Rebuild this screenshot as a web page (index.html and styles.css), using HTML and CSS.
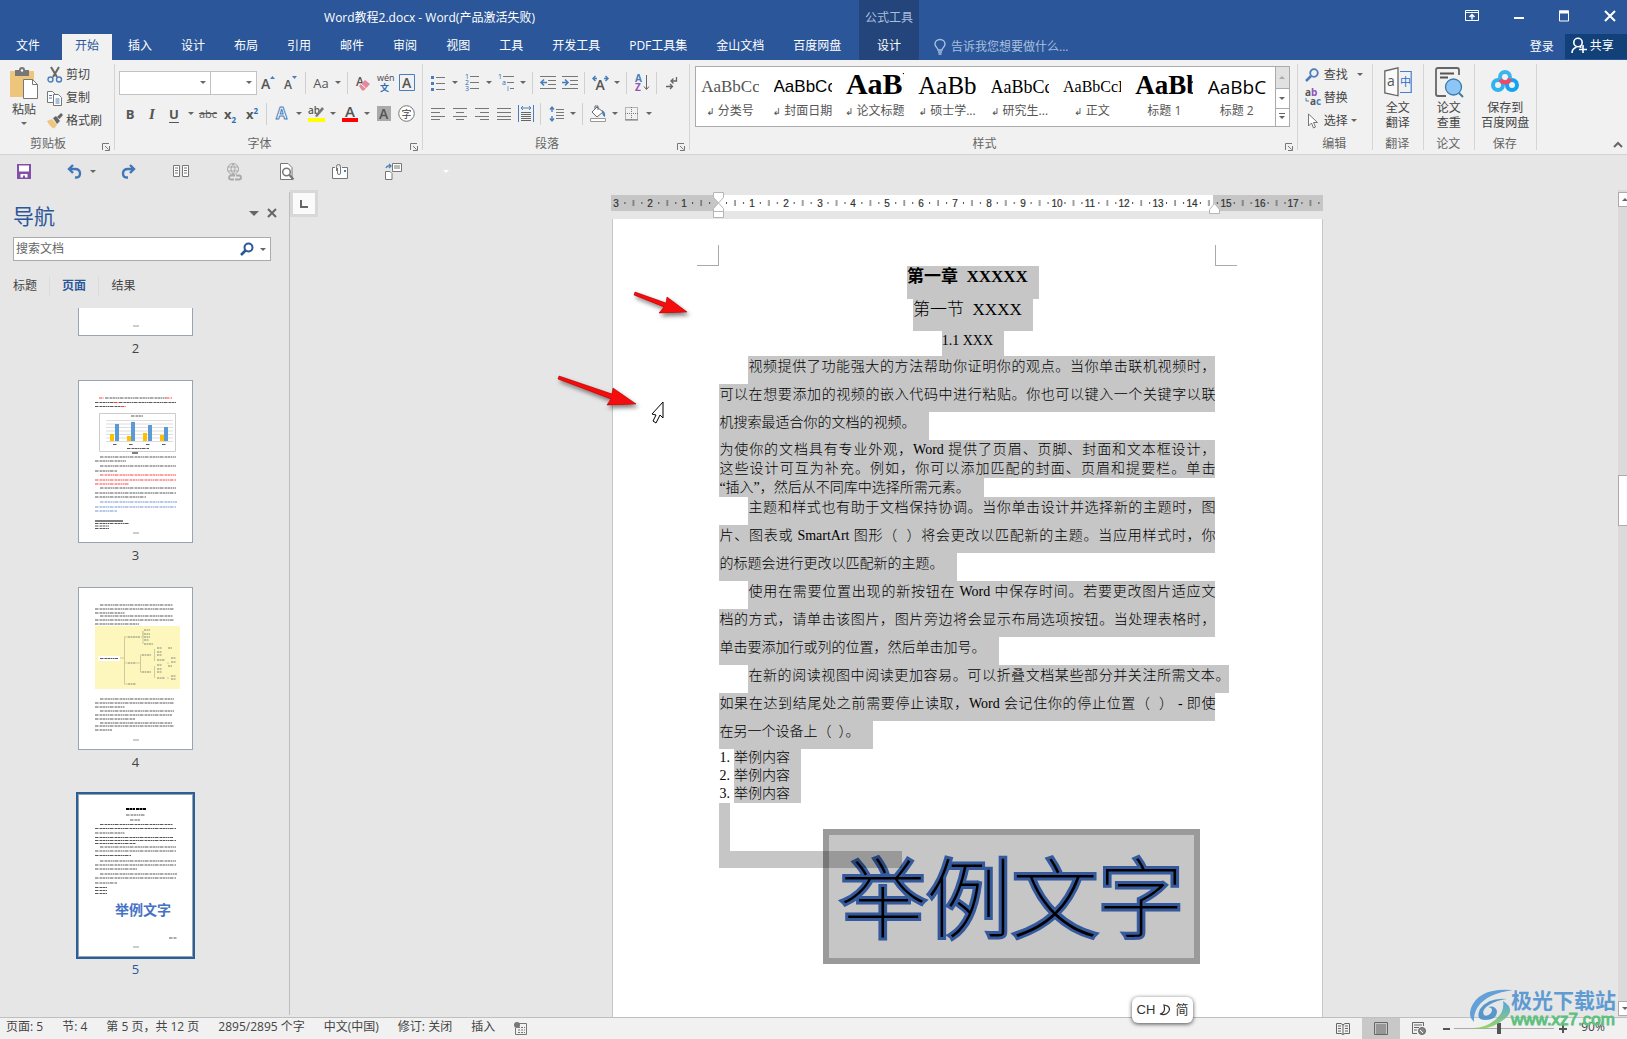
FILE: index.html
```html
<!DOCTYPE html>
<html lang="zh-CN">
<head>
<meta charset="utf-8">
<title>Word教程2.docx - Word</title>
<link rel="stylesheet" href="styles.css">
</head>
<body>
<div class="app">
  <header class="titlebar">
    <div class="tabs-side">
      <h1 class="doc-title">Word教程2.docx - Word(产品激活失败)</h1>
      <nav class="tabs">
        <button class="tab file">文件</button>
        <button class="tab active">开始</button>
        <button class="tab">插入</button>
        <button class="tab">设计</button>
        <button class="tab">布局</button>
        <button class="tab">引用</button>
        <button class="tab">邮件</button>
        <button class="tab">审阅</button>
        <button class="tab">视图</button>
        <button class="tab">工具</button>
        <button class="tab">开发工具</button>
        <button class="tab">PDF工具集</button>
        <button class="tab">金山文档</button>
        <button class="tab">百度网盘</button>
      </nav>
    </div>
    <div class="context">
      <span class="context-name">公式工具</span>
      <button class="tab">设计</button>
    </div>
    <div class="tell">
      <svg width="12" height="16" viewBox="0 0 12 16" fill="none" stroke="#a9bfde" stroke-width="1.4"><path d="M4 11C4 9 1 8 1 5a5 4.500 0 0 1 10 0C11 8 8 9 8 11zM4 13h4M4.500 15h3"/></svg>
      <span>告诉我您想要做什么...</span>
    </div>
    <div class="window-side">
      <div class="win-buttons">
        <button aria-label="功能区显示选项"><svg width="14" height="12" viewBox="0 0 14 12" fill="none" stroke="#fff"><path d="M.5.5h13v10H.5zM.5 2.500h13"/><path d="M7 9.500V5M4.500 7 7 4.500 9.500 7" stroke-width="1.500"/></svg></button>
        <button aria-label="最小化"><svg width="10" height="12"><path d="M0 7h10v2H0z" fill="#fff"/></svg></button>
        <button aria-label="最大化"><svg width="10" height="12" viewBox="0 0 10 12" fill="none" stroke="#fff"><path d="M.5 1v10h9V1z"/><path d="M0 2h10" stroke-width="3"/></svg></button>
        <button aria-label="关闭"><svg width="12" height="12" viewBox="0 0 12 12" stroke="#fff" stroke-width="2"><path d="m1 1 10 10M11 1 1 11"/></svg></button>
      </div>
      <div class="account">
        <a href="#" class="login">登录</a>
        <button class="share"><svg width="16" height="17" viewBox="0 0 16 17" fill="none" stroke="#fff" stroke-width="1.600"><circle cx="7" cy="5.500" r="4.200"/><path d="M1 16c0-3 2-5 4.500-6M12 8v8M8 12.500h8M8.500 9.500l2 1"/></svg>共享</button>
      </div>
    </div>
  </header>

  <div class="ribbon">
    <section class="group clipboard">
      <div class="group-body clip-body">
        <button class="big paste">
          <svg width="28" height="32" viewBox="0 0 28 32"><path fill="#edc57b" d="M0 4h24v26H0z"/><path fill="#777" d="M5 3h4a3 3 0 0 1 6 0h4v6H5z"/><circle cx="12" cy="3.500" r="1.200" fill="#fff"/><path d="M13.500 12.500h9l5 5v14h-14z" fill="#fff" stroke="#777"/><path d="M22.500 12.500v5h5" fill="none" stroke="#777"/></svg>
          <span>粘贴</span><i class="arrow"></i>
        </button>
        <div class="stack">
          <button class="line"><svg width="16" height="16" viewBox="0 0 16 16" fill="none"><path d="m4 0 6 10M12 0 6 10" stroke="#666" stroke-width="2"/><circle cx="3.500" cy="12.500" r="2.500" stroke="#4a7ebb" stroke-width="1.400"/><circle cx="12" cy="12.500" r="2.500" stroke="#4a7ebb" stroke-width="1.400"/></svg>剪切</button>
          <button class="line"><svg width="16" height="16" viewBox="0 0 16 16" fill="#fff" stroke="#777"><path d="M.5 1.500h5l3 3v8h-8z"/><path d="M6.500 4.500h5l3 3v8h-8z"/><path d="M2 5.500h3M2 8h3M8.500 9h4M8.500 11h4M8.500 13h4" stroke="#4a7ebb"/></svg>复制</button>
          <button class="line"><svg width="16" height="16" viewBox="0 0 16 16"><path d="m0 8 5-2 5 6-3 3.500Q3 14 0 8z" fill="#edc57b"/><path d="m6 5 3-2 4 5-3 3zM10 4l4-4 2 2-3.500 4z" fill="#666"/></svg>格式刷</button>
        </div>
      </div>
      <div class="group-name"><span>剪贴板</span><svg class="launch" viewBox="0 0 8 8" fill="none" stroke="#777"><path d="M.5 7V.5H7M3 3l3.500 3.500M7.500 3v4.500H3"/></svg></div>
    </section>

    <section class="group font">
      <div class="group-body rows">
        <div class="row">
          <label class="combo family"><select aria-label="字体"><option></option></select><i class="arrow"></i></label>
          <label class="combo size"><select aria-label="字号"><option></option></select><i class="arrow"></i></label>
          <button class="b" aria-label="增大字号"><svg width="16" height="16"><text x="0" y="14" class="gl" font-size="14">A</text><path d="m9 4 2.500-3L14 4z" fill="#4a7ebb"/></svg></button>
          <button class="b" aria-label="缩小字号"><svg width="16" height="16"><text x="1" y="14" class="gl" font-size="12">A</text><path d="m9 1 2.500 3L14 1z" fill="#4a7ebb"/></svg></button>
          <i class="sep"></i>
          <button class="bd" aria-label="更改大小写"><span class="lt">Aa</span><i class="arrow"></i></button>
          <i class="sep"></i>
          <button class="b" aria-label="清除格式"><svg width="16" height="16"><text x="1" y="11" class="gl" font-size="12">A</text><path d="m4 11 6-6 5 4-6 6.500H7z" fill="#e8879a"/><path d="m6 9 4.500 4" stroke="#fff"/></svg></button>
          <button class="b" aria-label="拼音指南"><svg width="18" height="18"><text x="1" y="7" font-size="9" fill="#444">wén</text><text x="4" y="17" font-size="9" fill="#2b6cb5" font-weight="700">文</text></svg></button>
          <button class="b" aria-label="字符边框"><svg width="16" height="17"><path d="M.5.500h15v16H.5z" fill="none" stroke="#4a7ebb"/><text x="3" y="14" class="gl" font-size="14">A</text></svg></button>
        </div>
        <div class="row">
          <button class="b"><b class="lt">B</b></button>
          <button class="b"><i class="lt ital">I</i></button>
          <button class="bd"><b class="lt under">U</b><i class="arrow"></i></button>
          <button class="b"><s class="lt strike">abc</s></button>
          <button class="b"><b class="lt">x<sub>2</sub></b></button>
          <button class="b"><b class="lt">x<sup>2</sup></b></button>
          <i class="sep"></i>
          <button class="bd" aria-label="文本效果"><svg width="16" height="17"><text x="2" y="14" font-size="16" font-weight="700" fill="#fff" stroke="#4a7ebb">A</text></svg><i class="arrow"></i></button>
          <button class="bd" aria-label="突出显示"><svg width="17" height="18"><text x="0" y="9" class="gl" font-size="10">ab</text><path d="m7 11 7-9 2 2-7 8z" fill="#777"/><path fill="#ff0" d="M0 13h17v4H0z"/></svg><i class="arrow"></i></button>
          <button class="bd" aria-label="字体颜色"><svg width="17" height="18"><text x="3" y="12" class="gl" font-size="15">A</text><path fill="red" d="M0 13h16v4H0z"/></svg><i class="arrow"></i></button>
          <button class="b" aria-label="字符底纹"><svg width="15" height="16"><path fill="#aaa" d="M0 0h14v15H0z"/><text x="2" y="13" class="gl" font-size="14">A</text></svg></button>
          <button class="b" aria-label="带圈字符"><svg width="17" height="17"><circle cx="8.500" cy="8.500" r="7.800" fill="#fff" stroke="#777"/><text x="3.500" y="12.500" font-size="10" fill="#444">字</text></svg></button>
        </div>
      </div>
      <div class="group-name"><span>字体</span><svg class="launch" viewBox="0 0 8 8" fill="none" stroke="#777"><path d="M.5 7V.5H7M3 3l3.500 3.500M7.500 3v4.500H3"/></svg></div>
    </section>

    <section class="group para">
      <div class="group-body rows">
        <div class="row">
          <button class="bd" aria-label="项目符号"><svg width="14" height="16"><path d="M0 1h3v3H0zM0 7h3v3H0zM0 13h3v3H0z" fill="#4a7ebb"/><path d="M5 2.500h9M5 8.500h9M5 14.500h9" stroke="#777"/></svg><i class="arrow"></i></button>
          <button class="bd" aria-label="编号"><svg width="14" height="17"><g font-size="7" fill="#2b6cb5"><text y="5">1</text><text y="11">2</text><text y="17">3</text></g><path d="M5 2.500h9M5 8.500h9M5 14.500h9" stroke="#777"/></svg><i class="arrow"></i></button>
          <button class="bd" aria-label="多级列表"><svg width="16" height="17"><g font-size="7" fill="#2b6cb5"><text y="5">1</text><text x="4" y="11">a</text><text x="9" y="17">i</text></g><path d="M5 2.500h11M9 8.500h7M12 14.500h4" stroke="#777"/></svg><i class="arrow"></i></button>
          <i class="sep"></i>
          <button class="b" aria-label="减少缩进"><svg width="16" height="14" stroke="#777"><path d="M0 .5h16M8 4.500h8M8 8.500h8M0 12.500h16"/><path d="M7 6.500H1M4 3.500l-3 3 3 3" stroke="#4a7ebb" fill="none" stroke-width="1.600"/></svg></button>
          <button class="b" aria-label="增加缩进"><svg width="16" height="14" stroke="#777"><path d="M0 .5h16M8 4.500h8M8 8.500h8M0 12.500h16"/><path d="M0 6.500h6M3 3.500l3 3-3 3" stroke="#4a7ebb" fill="none" stroke-width="1.600"/></svg></button>
          <i class="sep"></i>
          <button class="bd" aria-label="中文版式"><svg width="17" height="16"><path d="M5 3.500H1M3.500 1 1 3.500 3.500 6M12 3.500h4M13.500 1 16 3.500 13.500 6" fill="none" stroke="#4a7ebb" stroke-width="1.500"/><text x="3.500" y="15" class="gl" font-size="14">A</text></svg><i class="arrow"></i></button>
          <i class="sep"></i>
          <button class="b" aria-label="排序"><svg width="15" height="18"><g font-size="10" font-weight="700"><text y="8" fill="#4a7ebb">A</text><text y="17" fill="#9055b5">Z</text></g><path d="M11.500 1v14M9 12.500l2.500 3 2.500-3" fill="none" stroke="#666"/></svg></button>
          <i class="sep"></i>
          <button class="b" aria-label="显示编辑标记"><svg width="12" height="14" fill="none" stroke="#666" stroke-width="1.300"><path d="M10.500 1v4H5M7.500 2.500 5 5l2.500 2.500M0 10.500h6M4 8l2.500 2.500L4 13"/></svg></button>
        </div>
        <div class="row">
          <button class="b" aria-label="左对齐"><svg width="14" height="12" stroke="#777"><path d="M0 .5h14M0 4.500h9M0 8.500h14M0 11.500h9"/></svg></button>
          <button class="b" aria-label="居中"><svg width="14" height="12" stroke="#777"><path d="M0 .5h14M3 4.500h8M0 8.500h14M3 11.500h8"/></svg></button>
          <button class="b" aria-label="右对齐"><svg width="14" height="12" stroke="#777"><path d="M0 .5h14M5 4.500h9M0 8.500h14M5 11.500h9"/></svg></button>
          <button class="b" aria-label="两端对齐"><svg width="14" height="12" stroke="#777"><path d="M0 .5h14M0 4.500h14M0 8.500h14M0 11.500h14"/></svg></button>
          <button class="b" aria-label="分散对齐"><svg width="16" height="17" fill="none" stroke="#4a7ebb"><path d="M.5 0v17M15.500 0v17M3 3h10M5 1 3 3l2 2M11 1l2 2-2 2"/><path d="M3 7.500h10M3 9.500h10M3 11.500h10M3 13.500h10M3 15.500h10" stroke="#666"/></svg></button>
          <i class="sep"></i>
          <button class="bd" aria-label="行距"><svg width="15" height="16"><path d="M3 1v5M1 3.500 3 1l2 2.500M3 15v-5M1 12.500 3 15l2-2.500" fill="none" stroke="#4a7ebb" stroke-width="1.400"/><path d="M7 3.500h8M7 6.500h8M7 9.500h8M7 12.500h8" stroke="#777"/></svg><i class="arrow"></i></button>
          <i class="sep"></i>
          <button class="bd" aria-label="底纹"><svg width="17" height="17"><path d="M2 7l5-5 6 5-6 5zM5 4V1h3v4" fill="#fff" stroke="#666"/><path d="M12 5q4 2 3 7-3-1-3-7z" fill="#4a7ebb"/><path d="M.5 13.500h15v3H.5z" fill="#fff" stroke="#999"/></svg><i class="arrow"></i></button>
          <button class="bd" aria-label="边框"><svg width="14" height="14" fill="none" stroke="#777" stroke-dasharray="1 1"><path d="M.5.500h12v12H.5zM6.500 0v13M0 6.500h13"/><path d="M0 13h13" stroke-dasharray="none"/></svg><i class="arrow"></i></button>
        </div>
      </div>
      <div class="group-name"><span>段落</span><svg class="launch" viewBox="0 0 8 8" fill="none" stroke="#777"><path d="M.5 7V.5H7M3 3l3.500 3.500M7.500 3v4.500H3"/></svg></div>
    </section>

    <section class="group styles">
      <div class="gallery">
        <div class="gallery-items">
          <button class="style"><span class="sample s1">AaBbCc</span><span class="sname"><em>↲</em>分类号</span></button>
          <button class="style"><span class="sample s2">AaBbCc</span><span class="sname"><em>↲</em>封面日期</span></button>
          <button class="style"><span class="sample s3">AaBb</span><span class="sname"><em>↲</em>论文标题</span></button>
          <button class="style"><span class="sample s4">AaBb</span><span class="sname"><em>↲</em>硕士学...</span></button>
          <button class="style"><span class="sample s5">AaBbCc</span><span class="sname"><em>↲</em>研究生...</span></button>
          <button class="style"><span class="sample s6">AaBbCcI</span><span class="sname"><em>↲</em>正文</span></button>
          <button class="style"><span class="sample s7">AaBb</span><span class="sname">标题 1</span></button>
          <button class="style"><span class="sample s8">AaBbC</span><span class="sname">标题 2</span></button>
        </div>
        <div class="gallery-scroll">
          <button class="off" aria-label="上一行"><i class="arrow up"></i></button>
          <button aria-label="下一行"><i class="arrow"></i></button>
          <button aria-label="其他" class="more"><i class="arrow"></i></button>
        </div>
      </div>
      <div class="group-name"><span>样式</span><svg class="launch" viewBox="0 0 8 8" fill="none" stroke="#777"><path d="M.5 7V.5H7M3 3l3.500 3.500M7.500 3v4.500H3"/></svg></div>
    </section>

    <section class="group edit">
      <div class="group-body stack">
        <button class="line"><svg width="14" height="14" fill="none" stroke="#4a7ebb"><circle cx="9" cy="5" r="3.800" stroke-width="1.800"/><path d="m6 8-5 5" stroke-width="2.500"/></svg>查找<i class="arrow far"></i></button>
        <button class="line"><svg width="16" height="17" font-weight="700" font-size="10"><text y="7" fill="#555">a<tspan fill="#9055b5">b</tspan></text><text x="5" y="16" fill="#555">a<tspan fill="#4a7ebb">c</tspan></text><path d="M1 9v3h3" fill="none" stroke="#4a7ebb"/></svg>替换</button>
        <button class="line"><svg width="14" height="16" fill="#fff" stroke="#777"><path d="M3.500 1v12l3-3 2 5 2-1-2-4.500h4z"/></svg>选择<i class="arrow"></i></button>
      </div>
      <div class="group-name plain"><span>编辑</span></div>
    </section>
    <section class="group one">
      <button class="group-body big"><svg width="28" height="30" viewBox="0 0 28 30" fill="none"><path d="M.8 4 14 .8v28L.8 26z" fill="#fafafa" stroke="#666" stroke-width="1.300"/><path d="M16 4.500h11.200v21H16" stroke="#4a7ed0" stroke-width="1.200"/><text x="3" y="19" font-size="14" fill="#555">a</text><text x="16" y="19" font-size="11" fill="#2b6cd0">中</text></svg><span>全文<br>翻译</span></button>
      <div class="group-name plain"><span>翻译</span></div>
    </section>
    <section class="group one">
      <button class="group-body big"><svg width="28" height="30" viewBox="0 0 28 30" fill="none"><path d="M24 8V3q0-2-2-2H3Q1 1 1 3v24q0 2 2 2h8" stroke="#666" stroke-width="1.800"/><path d="M5 6.500h14M5 10.500h8" stroke="#555" stroke-width="2"/><circle cx="18.500" cy="20" r="8" fill="#8ec5f7" stroke="#3a7ca8" stroke-width="1.300"/><path d="m24 26 4 4" stroke="#3a7ca8" stroke-width="2"/></svg><span>论文<br>查重</span></button>
      <div class="group-name plain"><span>论文</span></div>
    </section>
    <section class="group pan">
      <button class="group-body big"><svg width="28" height="30" viewBox="0 0 28 30" fill="none" stroke-width="4"><circle cx="7" cy="18" r="5" stroke="#2fb4ef"/><circle cx="21" cy="18" r="5" stroke="#13a3f2"/><circle cx="14" cy="10" r="5" stroke="#3cb5ee"/><path d="M9.500 12.500a5 5 0 0 0 9.500-1" stroke="#ee4a66"/></svg><span>保存到<br>百度网盘</span></button>
      <div class="group-name plain"><span>保存</span></div>
    </section>
    <div class="ribbon-end"><svg width="10" height="6" fill="none" stroke="#666" stroke-width="2"><path d="m1 5 4-4 4 4"/></svg></div>
  </div>

  <div class="qat">
    <button aria-label="保存"><svg width="14" height="15"><path fill="#8250a8" d="M0 0h14v15H0z"/><path fill="#fff" d="M2 1.500h10v6H2zM3.500 10h7v3.500H8v-2H6v2H3.500z"/></svg></button>
    <button aria-label="撤消" class="undo"><svg width="15" height="15" fill="none" stroke="#4077b8" stroke-width="2.400"><path d="M6 1 2 5l4 4M2 5h6q5 0 5 4.500T8 13.500"/></svg><i class="arrow"></i></button>
    <button aria-label="恢复"><svg width="15" height="15" fill="none" stroke="#4077b8" stroke-width="2.400"><path d="m9 1 4 4-4 4M13 5H7Q2 5 2 9.500T7 13.500"/></svg></button>
    <button aria-label="双页"><svg width="17" height="13" fill="#fff" stroke="#777"><path d="M.5.500h6v11h-6zM9.500.500h6v11h-6z"/><path d="M2 3h3M2 5.500h3M2 8h3M11 3h3M11 5.500h3M11 8h3"/></svg></button>
    <button aria-label="超链接"><svg width="17" height="18" fill="none" stroke="#a9a9a9"><circle cx="7" cy="6" r="5.500"/><path d="M2 4h10M2 8h10M7 1Q3 6 7 11M7 1q4 5 0 10"/><path d="M9 12.500H5a2 2 0 0 0 0 4h3M9 16.500h4a2 2 0 0 0 0-4h-3" stroke-width="1.800"/></svg></button>
    <button aria-label="打印预览"><svg width="15" height="18" fill="#fff" stroke="#777"><path d="M.5 16.500V.5H8l4 4v12z"/><circle cx="6.500" cy="9" r="3.800" stroke-width="1.500"/><path d="m9.500 12 4 4.500" stroke-width="2.200"/></svg></button>
    <button aria-label="附件"><svg width="17" height="16" fill="#fff" stroke="#777"><path d="M3 3.500H.5v11h15v-11H10"/><path d="M4.500 7V2.500a2 2 0 0 1 4 0V9a1.500 1.500 0 0 1-3 0V4" fill="none"/><path d="M12 6h2v2h-2z" fill="#4a7ebb" stroke="none"/></svg></button>
    <button aria-label="切换窗口"><svg width="17" height="17" fill="#fff" stroke="#777"><path d="M7.500.500h9v8h-9zM9 3h6M9 5h6M.5 8.500H5l2 2v6H.5z"/><path d="M1 5q1-3 5-2M4 1l2 2-2 2" fill="none" stroke="#4a7ebb" stroke-width="1.300"/></svg></button>
    <button aria-label="自定义" class="custom"><i class="arrow"></i></button>
  </div>

  <main class="main">
    <aside class="nav">
      <div class="nav-head"><h2>导航</h2><button aria-label="选项"><i class="arrow wide"></i></button><button aria-label="关闭窗格"><svg width="10" height="10" stroke="#666" stroke-width="2"><path d="m1 1 8 8M9 1 1 9"/></svg></button></div>
      <div class="search"><input type="text" placeholder="搜索文档" aria-label="搜索文档"><svg width="14" height="14" fill="none" stroke="#2b579a"><circle cx="8.500" cy="5.500" r="4" stroke-width="2"/><path d="m6 8-5 5" stroke-width="2.600"/></svg><i class="arrow"></i></div>
      <div class="nav-tabs"><button>标题</button><button class="on">页面</button><button>结果</button></div>
      <div class="thumbs">
        <div class="item"><div class="thumb cut"><svg viewBox="0 0 113 27"><path d="M54 18h6" stroke="#999"/></svg></div><span>2</span></div>
        <div class="item"><div class="thumb"><svg viewBox="0 0 113 161" fill="none">
          <path class="tx" d="M26 17H87M16 21.500H35M40 21.500H97M16 25.500H42M21 76H97M16 80H47M21 85H97M16 90H38M21 107H97M16 112H97M16 116H67M16 142.500H50M16 145H30M16 147.500H30"/>
          <path class="tx" stroke="red" d="M20 17h5M87 17h6M35 21.500h5M42 25.500h5M21 94H97M16 99H97M16 103H50"/>
          <path class="tx" stroke="#4472c4" d="M21 121H98M16 126H97M16 130H38"/>
          <path d="M20.500 32.500h76v38h-76z" stroke="#ccc"/><path d="M27 39.500h67M27 43h67M27 46.500h67M27 50h67M27 53.500h67M27 57h67M27 60.500h67" stroke="#ddd"/>
          <path d="M33 60v-7M50 60v-5M66 60v-8M83 60v-6" stroke="#ffc000" stroke-width="4"/><path d="M38 60V43M54 60V41M71 60V44M87 60V46" stroke="#5b9bd5" stroke-width="4"/>
          <path class="tx" d="M52 35h12M34 63.500h4M50 63.500h4M67 63.500h4M83 63.500h4M48 67.500h22"/><path d="M16 140h28M53 72h6" stroke="#000"/><path d="M54 152h6" stroke="#999"/></svg></div><span>3</span></div>
        <div class="item"><div class="thumb"><svg viewBox="0 0 113 161" fill="none"><path fill="#fdf6bd" d="M16 38h85v63H16z"/>
          <path class="tx" d="M21 17H94M16 21H95M16 25H46M21 28H94M16 32H95M16 36H60M21 111H95M16 115H95M16 119H46M21 123H95M16 127H93M16 131H56M21 135H93M16 138H95M16 142H33"/>
          <path stroke="#cfca9c" d="M41 70h4M45.500 49v47M45 49h4M45 75h4M45 96h4M62 49h2V43v13M57 75h4M61.500 67v17M61 67h2M61 84h2M75.500 61v12M75.500 78v12M88 75h2M88 90h2"/>
          <path stroke="#a9b08f" stroke-width="1.500" stroke-dasharray="2 .5" d="M49 49h12M49 75h8M49 96h8M63 67h9M63 84h9M65 42h6M65 46h6M65 49h6M65 52h5M65 56h9M78 60h5M78 64h5M78 67h5M78 72h8M78 77h5M78 81h5M78 84h5M78 90h8M89 60h4M92 70h5M92 74h5M89 78h4M92 88h5M92 91h5"/><path fill="#fff" d="M19 68h22v5H19z"/><path class="tx" d="M21 70.500h18"/><path d="M54 152h6" stroke="#999"/></svg></div><span>4</span></div>
        <div class="item on"><div class="thumb"><svg viewBox="0 0 113 161" fill="none"><path d="M47 14h9M57 14h10" stroke="#000" stroke-width="2" stroke-dasharray="3 .5"/>
          <path class="tx" d="M47 20h19M51 25h10M21 29.500H94M16 33.500H97M16 38H46M16 42.500H94M16 45.500H97M16 48.500H57M21 52H97M16 56H97M16 60.500H52M21 66H97M16 70H97M16 74H58M21 79H98M16 83H97M16 88H38M16 92.500H28M16 95.500H28M16 98.500H28M90 143h8"/><path d="M54 152h6" stroke="#999"/><text x="36" y="120" font-size="14" font-weight="700" fill="#4472c4">举例文字</text></svg></div><span>5</span></div>
      </div>
    </aside>

    <div class="corner"><button aria-label="制表符"><svg width="8" height="8" fill="none" stroke="#666" stroke-width="2"><path d="M1 0v7h7"/></svg></button></div>

    <div class="desk">
      <svg class="ruler" width="711" height="26" viewBox="1 0 711 26">
        <defs><pattern id="ticks" x="107" y="5" width="33.850" height="16" patternUnits="userSpaceOnUse"><path d="M8 7h1v2H8zM16.500 5h1v6h-1zM25 7h1v2h-1z" fill="#444"/></pattern></defs>
        <path fill="#c6c6c6" d="M0 5h712v16H0z"/><path fill="#fff" d="M107 5h495v16H107z"/><path fill="url(#ticks)" d="M10 5h702v16H10z"/>
        <g class="rnum"><text x="5" y="17">3</text><text x="39" y="17">2</text><text x="73" y="17">1</text><text x="141" y="17">1</text><text x="175" y="17">2</text><text x="209" y="17">3</text><text x="242" y="17">4</text><text x="276" y="17">5</text><text x="310" y="17">6</text><text x="344" y="17">7</text><text x="378" y="17">8</text><text x="412" y="17">9</text><text x="446" y="17">10</text><text x="479" y="17">11</text><text x="513" y="17">12</text><text x="547" y="17">13</text><text x="581" y="17">14</text><text x="615" y="17">15</text><text x="649" y="17">16</text><text x="682" y="17">17</text></g>
        <path d="M102.500 2.500h10v5l-5 5.500-5-5.500zM102.500 21.500v-3l5-5.500 5 5.500v3zM102.500 21.500h10v6h-10zM598.500 23.500v-4l5-6 5 6v4z" fill="#fff" stroke="#b5b5b5"/>
      </svg>
      <article class="page">
        <div class="crop"><i></i><i></i></div>
        <div class="head h-a"><span>第一章&nbsp; XXXXX</span></div>
        <div class="head h-b"><span>第一节&nbsp; XXXX</span></div>
        <div class="head h-c"><span>1.1 XXX</span></div>
        <p>
          <span class="ln first">视频提供了功能强大的方法帮助你证明你的观点。当你单击联机视频时，</span>
          <span class="ln">可以在想要添加的视频的嵌入代码中进行粘贴。你也可以键入一个关键字以联</span>
          <span class="ln end">机搜索最适合你的文档的视频。</span>
        </p>
        <p class="tight">
          <span class="ln">为使你的文档具有专业外观，Word 提供了页眉、页脚、封面和文本框设计，</span>
          <span class="ln">这些设计可互为补充。例如，你可以添加匹配的封面、页眉和提要栏。单击</span>
          <span class="ln end">“插入”，然后从不同库中选择所需元素。</span>
        </p>
        <p>
          <span class="ln first">主题和样式也有助于文档保持协调。当你单击设计并选择新的主题时，图</span>
          <span class="ln">片、图表或 SmartArt 图形（&nbsp; ）将会更改以匹配新的主题。当应用样式时，你</span>
          <span class="ln end">的标题会进行更改以匹配新的主题。</span>
        </p>
        <p>
          <span class="ln first">使用在需要位置出现的新按钮在 Word 中保存时间。若要更改图片适应文</span>
          <span class="ln">档的方式，请单击该图片，图片旁边将会显示布局选项按钮。当处理表格时，</span>
          <span class="ln end">单击要添加行或列的位置，然后单击加号。</span>
        </p>
        <p>
          <span class="ln first hang">在新的阅读视图中阅读更加容易。可以折叠文档某些部分并关注所需文本。</span>
          <span class="ln">如果在达到结尾处之前需要停止读取，Word 会记住你的停止位置（&nbsp; ） - 即使</span>
          <span class="ln end">在另一个设备上（&nbsp; ）。</span>
        </p>
        <ol class="list">
          <li>1.<span>举例内容</span></li>
          <li>2.<span>举例内容</span></li>
          <li>3.<span>举例内容</span></li>
        </ol>
        <div class="tail"><i class="t1"></i><i class="t2"></i><div class="wordart">举例文字</div></div>
      </article>
      <svg class="marks" width="140" height="170" viewBox="0 0 140 170">
        <defs><filter id="sh" x="-20%" y="-20%" width="150%" height="180%"><feDropShadow dx="2" dy="3" stdDeviation="2" flood-opacity=".5"/></filter></defs>
        <g fill="#f50a0a" stroke="#a80000" stroke-width=".6" filter="url(#sh)"><path d="m80 10 31 11 1-6 20 15-28 1 5-6-30-12z"/><path d="m4 94 53 18 1-6 23 16-29 1 4-6L3 97z"/></g>
        <path d="m108 120-11 12 4 1-3 6 3 2 4-8 3 3z" fill="#fff" stroke="#000"/>
      </svg>
    </div>

    <div class="vscroll">
      <button aria-label="向上滚动"><i class="arrow up"></i></button>
      <div class="track"><i class="thumbbar"></i></div>
      <button aria-label="向下滚动"><i class="arrow"></i></button>
    </div>
  </main>

  <footer class="status">
    <span>页面: 5</span><span>节: 4</span><span>第 5 页，共 12 页</span><span>2895/2895 个字</span><span>中文(中国)</span><span>修订: 关闭</span><span>插入</span>
    <svg width="14" height="13" fill="none" stroke="#777"><path d="M4 1.500h8.500v11h-11V6"/><circle cx="3" cy="3" r="3" fill="#777" stroke="none"/><path d="M4 5.500h7M4 8h7M4 10.500h7" stroke-dasharray="2 1"/></svg>
    <div class="status-right">
      <button class="view" aria-label="阅读视图"><svg width="14" height="13" fill="none" stroke="#666"><path d="M7 2v10.500M.5 1.500H5L7 3l2-1.500h4.500v10H9L7 12.500 5 11.500H.5zM2 4h3M2 6.500h3M2 9h3M9 4h3M9 6.500h3M9 9h3"/></svg></button>
      <button class="view on" aria-label="页面视图"><svg width="14" height="13" fill="none" stroke="#666"><path d="M.5.500h13v12H.5zM2 3h10M2 5h10M2 7h10M2 9h10M2 11h10"/></svg></button>
      <button class="view" aria-label="Web 版式"><svg width="14" height="13" fill="none" stroke="#666"><path d="M5 11.500H.5V.5h11V4M2 3h8M2 5.500h5M2 8h3"/><circle cx="10" cy="9" r="3.500" fill="#888"/><path d="M8 8l3 3" stroke="#fff"/></svg></button>
      <button class="zoom-btn" aria-label="缩小"><svg width="7" height="9"><path d="M0 4h7v2H0z" fill="#555"/></svg></button>
      <input class="zoom" type="range" min="0" max="100" value="45" aria-label="显示比例">
      <button class="zoom-btn" aria-label="放大"><svg width="8" height="9"><path d="M0 4h8v2H0zM3 1h2v8H3z" fill="#555"/></svg></button>
      <span class="pct">90%</span>
    </div>
  </footer>

  <div class="ime">CH <svg width="12" height="12" viewBox="0 0 12 12" fill="none" stroke="#333" stroke-width="1.200"><path d="M5 1q7 1 5 6-3 5-9 3 6-1 4-9z"/></svg> 简</div>
  <div class="watermark">
    <svg width="46" height="42" viewBox="0 0 46 42" opacity=".85"><defs><linearGradient id="wm" x1="0" y1="0" x2="0" y2="1"><stop offset="0" stop-color="#3c9be0"/><stop offset="1" stop-color="#8bd050"/></linearGradient></defs>
      <path d="M44 1Q10-2 2 19q-3 9 3 14Q4 16 22 7 30 3 44 1z" fill="#4a94d6"/><path d="M34 12q16 10-4 22-14 8-26 5 12 0 22-8 10-8 8-19z" fill="url(#wm)"/><path d="M38 10Q20 8 11 20q-5 11 5 11 12 0 12-9-2-6-9-4 6 1 3 6-4 4-7 2-3-5 5-10 8-5 18-6z" fill="#3f8bc8"/></svg>
    <div><strong>极光下载站</strong><span>www.xz7.com</span></div>
  </div>
</div>
</body>
</html>
```
FILE: styles.css
```css
* { box-sizing: border-box; }
body { margin: 0; font: 12px/16px "Open Sans", "Noto Sans CJK SC", sans-serif; color: #444; }
button { border: 0; padding: 0; margin: 0; background: none; font: inherit; color: inherit; }
svg { display: block; flex: none; overflow: visible; }
.app { position: relative; height: 100vh; display: grid; grid-template-rows: 60px 95px 35px minmax(0, 1fr) 22px; background: #e6e6e6; overflow: hidden; }
.arrow { flex: none; width: 0; height: 0; border: 3px solid transparent; border-top-color: #666; border-bottom: 0; }
.arrow.up { border-top: 0; border-bottom: 3px solid #aaa; }
.arrow.wide { border-width: 5px 5px 0; }

/* Title bar */
.titlebar { background: #2b579a; color: #fff; display: flex; }
.tabs-side { width: 859px; display: flex; flex-direction: column; justify-content: space-between; }
.doc-title { margin: 10px 0 0; text-align: center; font-size: 12px; line-height: 16px; font-weight: 400; }
.tabs { display: flex; gap: 3px; padding-left: 3px; }
.tab { height: 26px; padding: 0 13px 2px; color: #fff; white-space: nowrap; }
.tab.file { margin-right: 6px; }
.tab.active { background: #f1f1f1; color: #2b579a; }
.context { width: 60px; background: #23457b; display: flex; flex-direction: column; justify-content: space-between; align-items: center; }
.context-name { margin-top: 10px; color: #a9bfde; }
.tell { align-self: flex-end; display: flex; align-items: center; gap: 5px; height: 26px; padding-left: 15px; color: #a9bfde; }
.window-side { margin-left: auto; display: flex; flex-direction: column; justify-content: space-between; align-items: flex-end; }
.win-buttons { display: flex; gap: 35px; padding: 10px 15px 0 0; }
.account { display: flex; align-items: center; gap: 11px; padding-bottom: 1px; }
.login { color: #fff; text-decoration: none; }
.share { height: 25px; width: 66px; display: flex; align-items: center; gap: 3px; padding: 0 0 2px 6px; background: #124078; color: #fff; }

/* Ribbon */
.ribbon { display: flex; background: #f1f1f1; border-bottom: 1px solid #d2d2d2; padding: 4px 0; }
.group { border-right: 1px solid #d5d5d5; display: flex; flex-direction: column; justify-content: space-between; }
.group-name { position: relative; text-align: center; color: #666; height: 16px; line-height: 18px; margin-bottom: -1px; padding-right: 18px; }
.group-name.plain { padding-right: 1px; }
.launch { position: absolute; right: 4px; bottom: 0; width: 8px; height: 8px; }
.clipboard { width: 115px; }
.font { width: 308px; }
.para { width: 267px; }
.styles { flex: 1; min-width: 300px; }
.edit { width: 75px; }
.one { width: 51px; }
.pan { width: 62px; }
.ribbon-end { width: 94px; display: flex; justify-content: flex-end; align-items: flex-end; padding: 0 8px 2px 0; }
.clip-body { display: flex; gap: 9px; padding-left: 10px; }
.big { display: flex; flex-direction: column; align-items: center; line-height: 15px; padding-top: 3px; gap: 3px; }
.paste .arrow { margin-top: 2px; }
.stack { display: flex; flex-direction: column; margin-top: -1px; }
.line { height: 23px; display: flex; align-items: center; gap: 3px; white-space: nowrap; }
.line svg { width: 16px; }
.edit .stack { padding-left: 7px; }
.arrow.far { margin-left: 6px; }
.rows { display: flex; flex-direction: column; padding: 3px 0 0 4px; }
.row { display: flex; align-items: center; height: 31px; }
.b, .bd { height: 24px; display: flex; align-items: center; }
.b { width: 22px; justify-content: center; }
.bd { width: 34px; display: grid; grid-template-columns: 22px 12px; justify-items: center; }
.sep { width: 1px; height: 22px; background: #d0d0d0; margin: 0 4px 0 3px; }
.gl { font-weight: 600; fill: #555; }
.lt { font-size: 13px; color: #555; white-space: nowrap; }
.ital { font-family: "Liberation Serif", serif; font-size: 15px; font-weight: 700; }
.under { text-decoration: underline; text-underline-offset: 3px; }
.strike { font-size: 11px; }
.lt sub, .lt sup { font-size: 8px; line-height: 0; color: #2b6cb5; }
.combo { display: grid; align-items: center; background: #fff; border: 1px solid #c3c3c3; height: 24px; }
.combo select { grid-area: 1 / 1; appearance: none; border: 0; background: none; width: 100%; height: 22px; }
.combo .arrow { grid-area: 1 / 1; justify-self: end; margin-right: 4px; }
.family { width: 92px; }
.size { width: 47px; margin: 0 1px 0 -1px; }
.gallery { margin: 2px 7px 0 5px; height: 61px; border: 1px solid #ababab; background: #fff; display: flex; }
.gallery-items { flex: 1; display: flex; min-width: 0; overflow: hidden; }
.style { flex: 1 1 72px; min-width: 72px; padding: 4px 9px 0 5px; display: flex; flex-direction: column; align-items: center; overflow: hidden; }
.sample { height: 29px; line-height: 32px; width: 58px; overflow: hidden; white-space: nowrap; text-align: left; color: #000; font-family: "Liberation Serif", serif; }
.s1 { font-size: 17px; color: #555; }
.s2 { font-family: "Liberation Sans", sans-serif; font-size: 17px; }
.s3 { font-size: 30px; line-height: 26px; font-weight: 700; }
.s4 { font-size: 25px; line-height: 30px; }
.s5 { font-size: 18px; }
.s6 { font-size: 16px; }
.s7 { font-size: 27px; line-height: 28px; font-weight: 700; }
.s8 { font-family: "Open Sans", sans-serif; font-size: 19px; }
.sname { white-space: nowrap; color: #555; margin-top: 3px; }
.sname em { font: 10px "DejaVu Sans", sans-serif; margin-right: 3px; }
.gallery-scroll { width: 14px; border-left: 1px solid #ababab; display: grid; grid-template-rows: 21px 20px 1fr; }
.gallery-scroll button { display: grid; place-content: center; }
.gallery-scroll button + button { border-top: 1px solid #ababab; }
.gallery-scroll .off { background: #e1e1e1; }
.more .arrow::before { content: ""; display: block; width: 6px; height: 1px; margin: -6px 0 0 -3px; background: #666; }

/* Quick access */
.qat { display: flex; align-items: center; padding: 0 0 2px 10px; gap: 25px; }
.qat button { width: 28px; height: 28px; display: flex; justify-content: center; align-items: center; }
.qat .undo { gap: 8px; margin: 0 -6px 0 4px; }
.custom .arrow { border-top-color: #fff; }

/* Navigation pane */
.main { display: grid; grid-template-columns: 290px 28px minmax(0, 1fr) 13px; min-height: 0; }
.nav { border-right: 1px solid #bdbdbd; margin: 2px 0; display: flex; flex-direction: column; min-height: 0; }
.nav-head { display: flex; align-items: center; gap: 8px; height: 45px; padding: 0 12px 3px 13px; }
.nav-head button { display: flex; }
.nav-head h2 { margin: 6px auto 0 0; font-size: 21px; line-height: 28px; font-weight: 400; color: #2b579a; }
.search { margin: 0 18px 0 13px; height: 24px; border: 1px solid #ababab; background: #fff; display: flex; align-items: center; gap: 6px; padding-right: 4px; }
.search input { flex: 1; min-width: 0; border: 0; outline: 0; background: none; font: inherit; padding: 0 2px; }
.search input::placeholder { color: #666; opacity: 1; }
.nav-tabs { display: flex; padding: 15px 0 0 1px; }
.nav-tabs button { width: 49px; height: 20px; border-right: 1px solid #dcdcdc; }
.nav-tabs button:last-child { border: 0; }
.nav-tabs .on { color: #2b579a; font-weight: 700; }
.thumbs { flex: 1; min-height: 0; overflow: hidden; margin-top: 12px; display: flex; flex-direction: column; align-items: center; gap: 20px; padding-right: 18px; }
.item { display: flex; flex-direction: column; font-size: 13px; line-height: 24px; text-align: center; }
.thumb { width: 115px; height: 163px; border: 1px solid #9aa3b0; background: #fff; }
.thumb.cut { height: 28px; border-top: 0; }
.item.on { color: #2b579a; }
.item.on .thumb { outline: 2px solid #2a6099; }
.tx { stroke: #222; stroke-width: 1; stroke-dasharray: 3 .5 1 .5 2 .5; opacity: .75; }
.tx[stroke="red"] { stroke: red; }
.tx[stroke="#4472c4"] { stroke: #4472c4; }
.corner button { width: 28px; height: 27px; border: 3px solid #d8d8d8; background: #fafafa; display: grid; place-content: center; }

/* Document */
.desk { position: relative; overflow: hidden; display: flex; flex-direction: column; align-items: center; min-height: 0; }
.ruler { z-index: 1; }
.rnum { font: 10px "Liberation Sans", sans-serif; fill: #333; stroke: #333; stroke-width: .2; text-anchor: middle; }
.page { flex: 1 0 auto; width: 711px; margin-top: 3px; padding: 26px 107px 0 106px; background: #fff; border: 1px solid #c6c6c6; border-width: 0 1px; font: 300 14px/22px "Liberation Serif", "Noto Sans CJK SC", serif; color: #000; }
.crop { display: flex; justify-content: space-between; margin: 0 -22px; }
.crop i { width: 22px; height: 21px; border: solid #aaa; border-width: 0 1px 1px 0; }
.crop i + i { border-width: 0 0 1px 1px; }
.head { display: flex; justify-content: center; }
.head span { background: #c6c6c6; padding-right: 11px; margin-right: -11px; }
.h-a { font-size: 17px; font-weight: 700; }
.h-a span { height: 33px; }
.h-b { font-size: 17px; }
.h-b span { height: 32px; }
.h-c { line-height: 20px; }
.h-c span { height: 25px; }
.page p { margin: 0; }
.ln { display: block; height: 28px; background: #c6c6c6; text-align-last: justify; white-space: nowrap; }
.ln.first { margin-left: 29px; }
.ln.hang { margin-right: -14px; }
.ln.end { width: fit-content; padding-right: 14px; text-align-last: left; }
.tight .ln { height: 19px; line-height: 19px; }
.list { list-style: none; margin: 0; padding: 0; }
.list li { display: flex; gap: 4px; height: 18px; line-height: 18px; }
.list span { background: #c6c6c6; padding-right: 11px; }
.tail { position: relative; }
.tail i { display: block; position: relative; z-index: 1; background: rgba(0, 0, 0, .224); }
.t1 { width: 11px; height: 48px; }
.t2 { width: 183px; height: 17px; }
.wordart { position: absolute; left: 104px; top: 26px; width: 377px; height: 135px; border: 6px solid #9a9a9a; background: #c6c6c6; text-align: center; font: 100 86px/118px "Noto Sans CJK SC", sans-serif; white-space: nowrap; color: #000; -webkit-text-stroke: 6px #34599c; paint-order: stroke fill; }
.marks { position: absolute; left: 237px; top: 92px; z-index: 2; }

.vscroll { display: flex; flex-direction: column; padding: 2px 0 1px; background: #dadada; }
.vscroll button { height: 15px; border: 1px solid #ababab; border-right: 0; background: #fff; display: grid; place-content: center; }
.vscroll .arrow.up { border-bottom-color: #666; }
.track { flex: 1; }
.thumbbar { display: block; height: 51px; margin-top: 268px; background: #fff; border: 1px solid #ababab; border-right: 0; }

/* Status bar */
.status { background: #f1f1f1; border-top: 1px solid #bfbfbf; display: flex; align-items: center; gap: 19px; padding-left: 6px; white-space: nowrap; }
.status > span, .pct { padding-bottom: 3px; }
.status-right { margin-left: auto; display: flex; align-items: center; align-self: stretch; padding-right: 26px; }
.view { align-self: stretch; width: 38px; display: grid; place-content: center; }
.view.on { background: #c8c8c8; }
.zoom-btn { margin-left: 5px; }
.zoom { appearance: none; width: 100px; height: 12px; margin: 0 0 0 4px; background: linear-gradient(#aaa, #aaa) center / 100% 1px no-repeat; }
.zoom::-webkit-slider-thumb { appearance: none; width: 4px; height: 11px; background: #555; }
.pct { margin-left: 14px; }
.ime { position: absolute; left: 1132px; bottom: 16px; width: 61px; height: 26px; border-radius: 6px; background: #fff; box-shadow: 0 1px 4px rgba(0, 0, 0, .7); display: flex; align-items: center; justify-content: center; gap: 4px; color: #333; font-family: "Liberation Sans", "Noto Sans CJK SC", sans-serif; font-size: 13px; }
.watermark { position: absolute; right: 11px; bottom: 8px; display: flex; align-items: center; pointer-events: none; }
.watermark div { display: flex; flex-direction: column; margin: -4px 0 0 -4px; }
.watermark strong { font: 700 21px/24px "Noto Sans CJK SC", sans-serif; color: #5e9bd3; }
.watermark span { font: 17px/18px "Liberation Sans", sans-serif; color: #5fc080; -webkit-text-stroke: 1px #5fc080; }
```
